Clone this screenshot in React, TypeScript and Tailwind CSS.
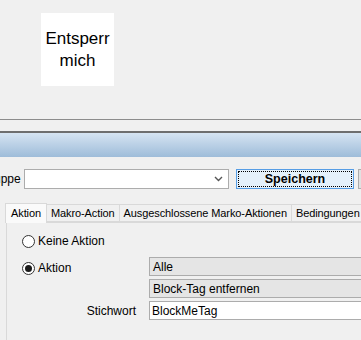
const font = { fontFamily: '"Liberation Sans", Arial, sans-serif' };

function Radio({ checked, label }: { checked?: boolean; label: string }) {
  return (
    <div className="flex items-center gap-[3px]">
      <span className="w-[13px] h-[13px] rounded-full border border-[#333] bg-white flex items-center justify-center">
        {checked && <span className="w-[7px] h-[7px] rounded-full bg-[#1a1a1a]" />}
      </span>
      <span>{label}</span>
    </div>
  );
}

function Tab({ label, active }: { label: string; active?: boolean }) {
  return (
    <div
      className={
        active
          ? "h-[20px] px-[5px] flex items-center bg-[#fafafa] border border-b-0 border-[#d9d9d9] -mb-px relative z-10"
          : "h-[18px] px-[4px] flex items-center bg-[#f0f0f0] border border-[#d9d9d9] -ml-px"
      }
    >
      {label}
    </div>
  );
}

export default function App() {
  return (
    <div className="w-[361px] h-[340px] overflow-hidden bg-[#f0f0f0] text-[12px] text-black" style={font}>
      <div className="h-[119px] pt-[13px] pl-[41px]">
        <div className="w-[73px] h-[73px] bg-white flex items-center justify-center text-center text-[17px] leading-[22px]">
          Entsperr
          <br />
          mich
        </div>
      </div>
      <div className="h-px bg-[#8c8c8c]" />
      <div className="h-[11px]" />
      <div className="h-[2px] bg-[#6e6e6e]" />
      <div className="h-[24px] bg-gradient-to-b from-[#d6e4f2] to-[#9ebcd9]" />

      <div className="mt-[12px] flex items-center h-[20px]">
        <span className="w-[24px] -ml-[6px] pr-[4px] text-right whitespace-nowrap">uppe</span>
        <div className="w-[205px] h-[20px] bg-white border border-[#acacac] flex items-center justify-end pr-[5px] ml-[6px] shrink-0">
          <svg width="9" height="6" viewBox="0 0 9 6">
            <path d="M1 1 L4.5 4.5 L8 1" stroke="#555" strokeWidth="1.4" fill="none" />
          </svg>
        </div>
        <div className="ml-[7px] w-[118px] h-[20px] border border-[#569de5] bg-[#e5f1fb] p-[1px] shrink-0">
          <div className="w-full h-full border border-dotted border-black flex items-center justify-center font-bold text-[12.5px]">
            Speichern
          </div>
        </div>
        <div className="ml-[4px] w-[10px] h-[20px] border border-[#acacac] bg-[#e1e1e1] shrink-0" />
      </div>

      <div className="mt-[14px] ml-[5px] flex items-end whitespace-nowrap text-[11px] tracking-[-0.1px]">
        <Tab label="Aktion" active />
        <Tab label="Makro-Action" />
        <Tab label="Ausgeschlossene Marko-Aktionen" />
        <Tab label="Bedingungen" />
      </div>
      <div className="ml-[6px] h-[200px] border-l border-t border-[#d9d9d9] bg-[#f0f0f0] pl-[15px] pt-[9px]">
        <Radio label="Keine Aktion" />
        <div className="mt-[7px] grid grid-cols-[127px_1fr] gap-y-[3px] items-center">
          <div className="row-span-2 self-start pt-[2px]">
            <Radio checked label="Aktion" />
          </div>
          <div className="h-[19px] bg-[#e5e5e5] border border-[#acacac] border-r-0 flex items-center pl-[3px]">Alle</div>
          <div className="h-[19px] bg-[#e5e5e5] border border-[#acacac] border-r-0 flex items-center pl-[3px]">
            Block-Tag entfernen
          </div>
          <div className="text-right pr-[13px]">Stichwort</div>
          <div className="h-[19px] bg-white border border-[#acacac] border-r-0 flex items-center pl-[2px]">BlockMeTag</div>
        </div>
      </div>
    </div>
  );
}
